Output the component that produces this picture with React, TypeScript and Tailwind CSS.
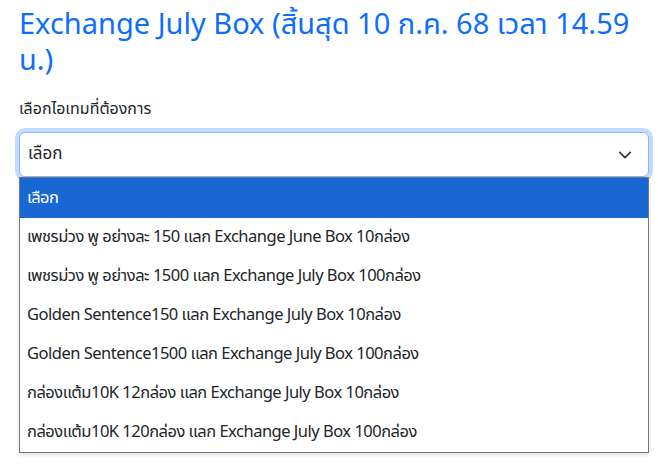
import React from "react";

const items = [
  "เพชรม่วง พู อย่างละ 150 แลก Exchange June Box 10กล่อง",
  "เพชรม่วง พู อย่างละ 1500 แลก Exchange July Box 100กล่อง",
  "Golden Sentence150 แลก Exchange July Box 10กล่อง",
  "Golden Sentence1500 แลก Exchange July Box 100กล่อง",
  "กล่องแต้ม10K 12กล่อง แลก Exchange July Box 10กล่อง",
  "กล่องแต้ม10K 120กล่อง แลก Exchange July Box 100กล่อง",
];

export default function App() {
  return (
    <div
      className="w-[658px] h-[465px] bg-white overflow-hidden pl-[19px] pr-[9px] pt-[7px]"
      style={{ fontFamily: '"Noto Sans Thai", "Noto Sans", sans-serif' }}
    >
      <h1 className="text-[29px] leading-[36px] text-[#0d6efd] font-normal pr-[10px]">
        Exchange July Box (สิ้นสุด 10 ก.ค. 68 เวลา 14.59 น.)
      </h1>
      <div className="mt-[19px] text-[16px] leading-[22px] text-[#212529]">
        เลือกไอเทมที่ต้องการ
      </div>
      <div className="mt-[12px] relative">
        <div className="h-[45px] rounded-[6px] border border-[#86b7fe] shadow-[0_0_0_4px_rgba(13,110,253,0.25)] bg-white flex items-center justify-between pl-[8px] pr-[16px] text-[17px] text-[#212529]">
          <span>เลือก</span>
          <svg width="14" height="14" viewBox="0 0 16 16" fill="none">
            <path d="M2 5l6 6 6-6" stroke="#343a40" strokeWidth="2" strokeLinecap="round" strokeLinejoin="round" />
          </svg>
        </div>
        <div className="absolute left-0 right-0 top-[45px] border border-[#767676] bg-white shadow-[0_2px_4px_rgba(0,0,0,0.12)] text-[16.5px] tracking-[-0.5px] text-[#212529]">
          <div className="h-[40px] flex items-center pl-[7px] bg-[#1967d2] text-white">เลือก</div>
          {items.map((t) => (
            <div key={t} className="h-[39px] flex items-center pl-[7px]">
              {t}
            </div>
          ))}
        </div>
      </div>
    </div>
  );
}
